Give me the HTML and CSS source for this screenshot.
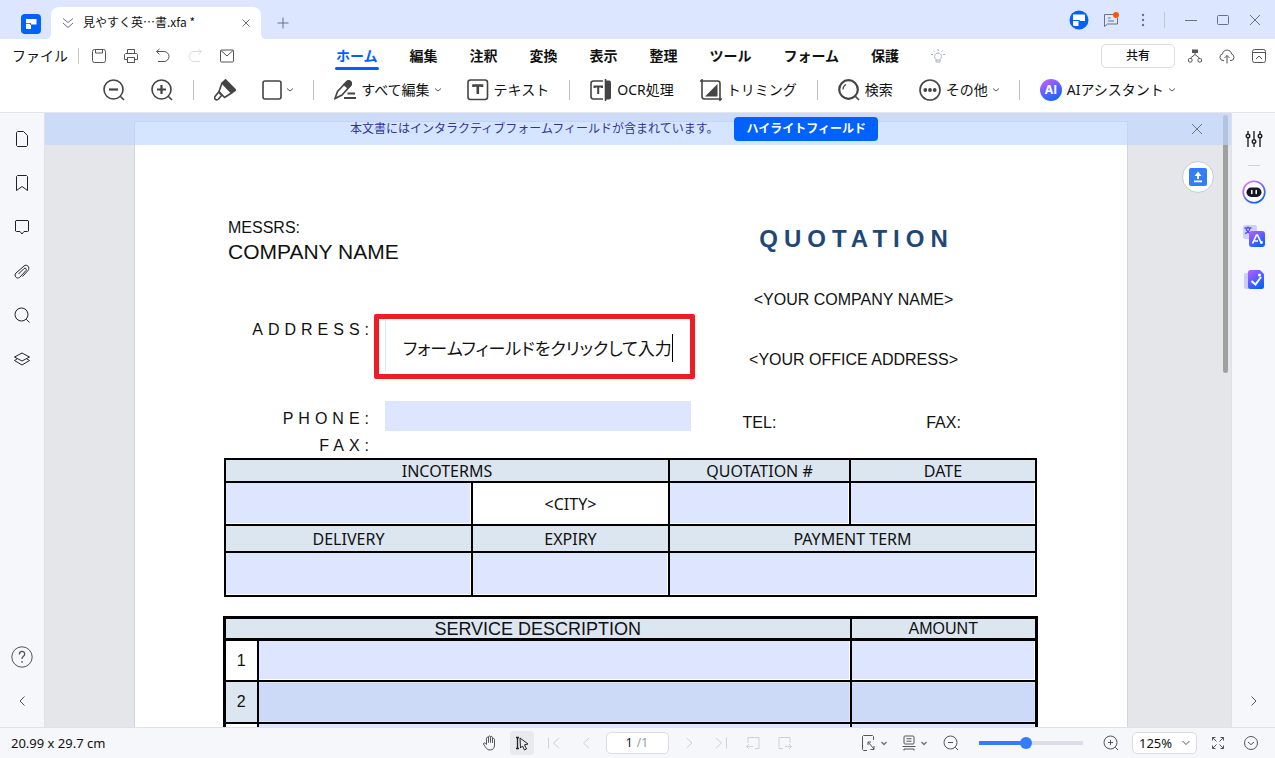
FILE: index.html
```html
<!DOCTYPE html>
<html lang="ja">
<head>
<meta charset="utf-8">
<title>見やすく英…書.xfa *</title>
<link rel="stylesheet" href="styles.css">
</head>
<body>
<header class="titlebar">
  <div class="titlebar-left">
    <svg class="app-logo" width="20" height="20" viewBox="0 0 20 20"><rect width="20" height="20" rx="4" fill="#0061ff"/><path d="M5 5h10.500v5.500H10V15H5z" fill="#fff"/><path d="M5 9.500h5M9.500 9v2" stroke="#0061ff" stroke-width=".8"/></svg>
    <div class="tab">
      <svg class="line-icon soft" width="12" height="12" viewBox="0 0 12 12"><path d="M1 1.500l5 4 5-4M1 6l5 4.500L11 6"/></svg>
      <span class="tab-name">見やすく英…書.xfa *</span>
      <button class="tab-close" aria-label="タブを閉じる"><svg class="line-icon soft" width="8" height="8" viewBox="0 0 8 8"><path d="M.5.5l7 7M7.500.5l-7 7"/></svg></button>
    </div>
    <button class="new-tab" aria-label="新しいタブ"><svg class="line-icon soft" width="12" height="12" viewBox="0 0 12 12"><path d="M6 .5v11M.5 6h11"/></svg></button>
  </div>
  <div class="titlebar-right">
    <button class="win-btn" aria-label="アカウント"><svg width="20" height="20" viewBox="0 0 20 20"><circle cx="10" cy="10" r="9.500" fill="#0061ff"/><path d="M4 4.500h12V11H4zM4 11h6v5H5l-1-1z" fill="#fff"/><path d="M4 10.500h6.500M10 10v6" stroke="#0061ff" stroke-width="1"/></svg></button>
    <button class="win-btn" aria-label="お知らせ"><svg class="line-icon soft" width="18" height="18" viewBox="0 0 18 18"><path d="M12 3.500H2.500v12l3-2.500h10V7M6 7h2.500M6 10h6"/><circle cx="14" cy="4" r="3" fill="#ff5500" stroke="none"/></svg></button>
    <button class="win-btn" aria-label="メニュー"><svg width="4" height="14" viewBox="0 0 4 14" fill="#6b7085"><circle cx="2" cy="2" r="1.200"/><circle cx="2" cy="7" r="1.200"/><circle cx="2" cy="12" r="1.200"/></svg></button>
    <span class="win-sep"></span>
    <button class="win-btn" aria-label="最小化"><svg class="line-icon soft" width="12" height="12" viewBox="0 0 12 12"><path d="M0 6.500h12"/></svg></button>
    <button class="win-btn" aria-label="最大化"><svg class="line-icon soft" width="12" height="12" viewBox="0 0 12 12"><rect x=".5" y="1.500" width="11" height="9" rx="1"/></svg></button>
    <button class="win-btn" aria-label="閉じる"><svg class="line-icon soft" width="12" height="12" viewBox="0 0 12 12"><path d="M1 1l10 10M11 1L1 11"/></svg></button>
  </div>
</header>

<div class="menubar">
  <div class="menu-left">
    <button class="file-btn">ファイル</button>
    <span class="bar-sep"></span>
    <div class="quick">
      <button aria-label="保存"><svg class="line-icon" width="16" height="16" viewBox="0 0 16 16"><rect x="1.500" y="1.500" width="13" height="13" rx="2"/><path d="M4.500 1.500V5h7V1.500"/></svg></button>
      <button aria-label="印刷"><svg class="line-icon" width="16" height="16" viewBox="0 0 16 16"><path d="M4.500 5.500v-4h7v4M4.500 11.500h-3v-5l1-1h11l1 1v5h-3"/><rect x="4.500" y="9.500" width="7" height="5"/></svg></button>
      <button aria-label="元に戻す"><svg class="line-icon" width="16" height="16" viewBox="0 0 16 16"><path d="M4.500 1l-3 2.500 3 3M1.500 3.500H9a5 5 0 0 1 0 10H3"/></svg></button>
      <button aria-label="やり直す" disabled><svg class="line-icon faint" width="16" height="16" viewBox="0 0 16 16"><path d="M11.500 1l3 2.500-3 3M14.500 3.500H7a5 5 0 0 0 0 10h6"/></svg></button>
      <button aria-label="メール"><svg class="line-icon" width="16" height="16" viewBox="0 0 16 16"><rect x="1.500" y="2" width="13" height="12" rx="1"/><path d="M2 2.500L8 8l6-5.500"/></svg></button>
    </div>
  </div>
  <nav class="menu-nav">
    <a href="#" class="active">ホーム</a>
    <a href="#">編集</a>
    <a href="#">注釈</a>
    <a href="#">変換</a>
    <a href="#">表示</a>
    <a href="#">整理</a>
    <a href="#">ツール</a>
    <a href="#">フォーム</a>
    <a href="#">保護</a>
    <button aria-label="ヒント"><svg class="line-icon hint" width="14" height="16" viewBox="0 0 14 16"><path d="M5 11.500C2.500 9.500 3.500 5 7 5s4.500 4.500 2 6.500v2.500H5zM5 12h4M7 1v2M2.500 2.500l1 1.300M11.500 2.500l-1 1.300M0 6.500h2M12 6.500h2"/></svg></button>
  </nav>
  <div class="menu-right">
    <button class="share">共有</button>
    <div class="quick">
      <button aria-label="構成"><svg class="line-icon" width="16" height="16" viewBox="0 0 16 16"><rect x="5.500" y="2" width="5" height="2.500" fill="#555"/><path d="M8 4.500v2L3.500 10M8 6.500l4.500 3.500"/><rect x="1.500" y="10.500" width="3.500" height="3.500" rx="1"/><rect x="11" y="10.500" width="3.500" height="3.500" rx="1"/></svg></button>
      <button aria-label="クラウドへアップロード"><svg class="line-icon" width="16" height="16" viewBox="0 0 16 16"><path d="M5 12.500H4a3.300 3.300 0 0 1-.5-6.500C4 .8 12 .8 12.500 6a3.300 3.300 0 0 1-.5 6.500h-1M8 15.500V7.500M5.500 10L8 7.500l2.500 2.500"/></svg></button>
      <button aria-label="リボンを折りたたむ"><svg class="line-icon" width="16" height="16" viewBox="0 0 16 16"><rect x="1.500" y="1.500" width="13" height="13" rx="2"/><path d="M1.500 4.500h13M5 11l3-3 3 3"/></svg></button>
    </div>
  </div>
</div>

<div class="toolbar">
  <div class="group">
    <button class="tool" aria-label="縮小"><svg class="bold-icon" width="22" height="22" viewBox="0 0 22 22"><circle cx="10.500" cy="10.500" r="9.500"/><path d="M17.500 17.500l3.500 3.500"/><path d="M6 10.500h9" stroke-width="2.200"/></svg></button>
    <button class="tool" aria-label="拡大"><svg class="bold-icon" width="22" height="22" viewBox="0 0 22 22"><circle cx="10.500" cy="10.500" r="9.500"/><path d="M17.500 17.500l3.500 3.500"/><path d="M6 10.500h9M10.500 6v9" stroke-width="2.200"/></svg></button>
  </div>
  <span class="tool-sep"></span>
  <div class="group">
    <button class="tool" aria-label="ハイライト"><svg class="bold-icon" width="22" height="22" viewBox="0 0 22 22"><path d="M8 4L11.500.8 21.500 11l-4 3z" fill="#444" stroke-linejoin="round"/><path d="M8 4L5 12.500l5.500 6 7-4.500M5 12.500L1 17.500c-1.500 2.500 1.500 4.500 3.500 2.500l3-3.500M5 13.500l3.500 3.500" stroke-linejoin="round"/></svg></button>
    <button class="tool" aria-label="図形"><svg class="bold-icon" width="20" height="20" viewBox="0 0 20 20"><rect x="1" y="1" width="18" height="18" rx="2"/></svg><svg class="line-icon chev" width="6" height="4" viewBox="0 0 6 4"><path d="M0 .5l3 2.500 3-2.500"/></svg></button>
  </div>
  <span class="tool-sep"></span>
  <div class="group">
    <button class="tool"><svg class="bold-icon" width="22" height="20" viewBox="0 0 22 20"><path d="M1 18.500l2.500-7L12 2.500c3-3.500 7 0 4.500 3L8 15l-7 3.500z"/><path d="M12 2.500c3-3.500 7 0 4.500 3L14 8l-4-3.500z" fill="#444"/><path d="M13.500 13.500H21M10 18h12" stroke-width="2"/></svg><span>すべて編集</span><svg class="line-icon chev" width="6" height="4" viewBox="0 0 6 4"><path d="M0 .5l3 2.500 3-2.500"/></svg></button>
    <button class="tool"><svg class="bold-icon" width="22" height="22" viewBox="0 0 22 22"><rect x="1" y="1" width="19.500" height="19.500" rx="2.500"/><path d="M6.500 8V6.500h8.500V8M10.800 6.500V15" stroke-width="2.600"/></svg><span>テキスト</span></button>
  </div>
  <span class="tool-sep"></span>
  <div class="group">
    <button class="tool"><svg class="bold-icon" width="22" height="22" viewBox="0 0 22 22"><path d="M13 2H3.500Q1 2 1 4.500v13Q1 20 3.500 20H13" /><path d="M4.500 9V7.500h7.500V9M8.200 7.500V15" stroke-width="2"/><path d="M15.500 0v22" /><path d="M15.500 1.500h3.500q2 0 2 2v15q0 2-2 2h-3.500z" fill="#444" stroke="none"/></svg><span>OCR処理</span></button>
    <button class="tool"><svg class="bold-icon" width="22" height="22" viewBox="0 0 22 22"><path d="M2 0v17.500Q2 20 4.500 20H22M0 2h17.500Q20 2 20 4.500V22"/><path d="M5 17.500L17.500 5v12.500z" fill="#444" stroke="none"/></svg><span>トリミング</span></button>
  </div>
  <span class="tool-sep"></span>
  <div class="group">
    <button class="tool"><svg class="bold-icon" width="22" height="22" viewBox="0 0 22 22"><circle cx="10.500" cy="10.500" r="9.300" stroke-width="2.200"/><path d="M17.500 17.500l3.500 3.500"/><path d="M5 10.500A5.500 5.500 0 0 1 8 5.500" stroke-width="1.200"/></svg><span>検索</span></button>
    <button class="tool"><svg class="bold-icon" width="22" height="22" viewBox="0 0 22 22"><circle cx="11" cy="11" r="10"/><g fill="#444" stroke="none"><circle cx="6.300" cy="11" r="1.900"/><circle cx="11" cy="11" r="1.900"/><circle cx="15.700" cy="11" r="1.900"/></g></svg><span>その他</span><svg class="line-icon chev" width="6" height="4" viewBox="0 0 6 4"><path d="M0 .5l3 2.500 3-2.500"/></svg></button>
  </div>
  <span class="tool-sep"></span>
  <div class="group">
    <button class="tool"><span class="ai-badge">AI</span><span>AIアシスタント</span><svg class="line-icon chev" width="6" height="4" viewBox="0 0 6 4"><path d="M0 .5l3 2.500 3-2.500"/></svg></button>
  </div>
</div>

<div class="workspace">
  <aside class="side side-left">
    <button aria-label="サムネイル"><svg class="line-icon dark" width="16" height="16" viewBox="0 0 16 16"><path d="M3.500.5h6l4 4v10l-1 1h-9l-1-1v-13z"/></svg></button>
    <button aria-label="ブックマーク"><svg class="line-icon dark" width="16" height="18" viewBox="0 0 16 18"><path d="M2.500 16.500v-14l1-1h9l1 1v14L8 12.500z"/></svg></button>
    <button aria-label="コメント"><svg class="line-icon dark" width="16" height="16" viewBox="0 0 16 16"><path d="M2 1.500h12l.5.5v10l-1 .5H10L8 15l-2-2.500H2.500l-1-.5V2z"/></svg></button>
    <button aria-label="添付ファイル"><svg class="line-icon dark" width="16" height="16" viewBox="0 0 16 16"><path d="M8.500 13.500l5.500-6c2.500-3-1-7-4-4.500L2 10c-2.500 2.500.5 6.500 3.500 4.500L12 7.500c1-1.500-.5-3-2-2L4.500 11"/></svg></button>
    <button aria-label="検索"><svg class="line-icon dark" width="16" height="16" viewBox="0 0 16 16"><circle cx="7.500" cy="7.500" r="6.500"/><path d="M12.300 12.300L15.500 15.500"/></svg></button>
    <button aria-label="レイヤー"><svg class="line-icon dark" width="16" height="16" viewBox="0 0 16 16"><path d="M8 2l7.500 4L8 10 .5 6zM3 8L.5 9.500 8 14l7.500-4.500L13 8"/></svg></button>
    <button class="push-end" aria-label="ヘルプ"><svg class="line-icon" width="22" height="22" viewBox="0 0 22 22"><circle cx="11" cy="11" r="10.200"/><path d="M8.300 8.500c0-4 5.400-4 5.400-.5 0 2.500-2.700 2-2.700 5M11 15v1.800" stroke-width="1.300"/></svg></button>
    <button aria-label="サイドバーを閉じる"><svg class="line-icon" width="6" height="10" viewBox="0 0 6 10"><path d="M5.500.5L1 5l4.500 4.500"/></svg></button>
  </aside>

  <main class="viewer">
    <article class="page">
      <section class="doc-head">
        <div class="doc-left">
          <p class="messrs">MESSRS:</p>
          <p class="company">COMPANY NAME</p>
          <div class="row row-address">
            <label class="tracked" for="addr">ADDRESS:</label>
            <div class="callout">
              <div class="callout-inner"><input id="addr" type="text" value="フォームフィールドをクリックして入力"><span class="caret"></span></div>
            </div>
          </div>
          <div class="row row-phone">
            <label class="tracked" for="phone">PHONE:</label>
            <input id="phone" class="phone" type="text">
          </div>
          <p class="tracked fax">FAX:</p>
        </div>
        <div class="doc-right">
          <h1>QUOTATION</h1>
          <p class="your-company">&lt;YOUR COMPANY NAME&gt;</p>
          <p class="your-office">&lt;YOUR OFFICE ADDRESS&gt;</p>
          <div class="contacts"><span>TEL:</span><span>FAX:</span></div>
        </div>
      </section>

      <table class="terms">
        <colgroup><col class="c1"><col class="c2"><col class="c3"><col class="c4"></colgroup>
        <tr class="t-r1"><th colspan="2">INCOTERMS</th><th>QUOTATION #</th><th>DATE</th></tr>
        <tr class="t-r2"><td><input aria-label="INCOTERMS" type="text"></td><td>&lt;CITY&gt;</td><td><input aria-label="QUOTATION #" type="text"></td><td><input aria-label="DATE" type="text"></td></tr>
        <tr class="t-r3"><th>DELIVERY</th><th>EXPIRY</th><th colspan="2">PAYMENT TERM</th></tr>
        <tr class="t-r4"><td><input aria-label="DELIVERY" type="text"></td><td><input aria-label="EXPIRY" type="text"></td><td colspan="2"><input aria-label="PAYMENT TERM" type="text"></td></tr>
      </table>

      <table class="services">
        <colgroup><col class="s1"><col class="s2"><col class="s3"></colgroup>
        <tr class="s-head"><th colspan="2" class="service-title">SERVICE DESCRIPTION</th><th>AMOUNT</th></tr>
        <tr><td>1</td><td><input aria-label="SERVICE 1" type="text"></td><td><input aria-label="AMOUNT 1" type="text"></td></tr>
        <tr class="alt"><td>2</td><td><input aria-label="SERVICE 2" type="text"></td><td><input aria-label="AMOUNT 2" type="text"></td></tr>
        <tr><td></td><td><input aria-label="SERVICE 3" type="text"></td><td><input aria-label="AMOUNT 3" type="text"></td></tr>
      </table>
    </article>

    <span class="scroll-thumb"></span>
    <div class="banner">
      <div class="banner-body">
        <span>本文書にはインタラクティブフォームフィールドが含まれています。</span>
        <button class="highlight">ハイライトフィールド</button>
      </div>
      <button class="banner-close" aria-label="閉じる"><svg class="line-icon soft" width="12" height="12" viewBox="0 0 12 12"><path d="M1 1l10 10M11 1L1 11"/></svg></button>
    </div>
    <button class="float-btn" aria-label="アップロード"><svg width="18" height="18" viewBox="0 0 18 18"><rect width="18" height="18" rx="2" fill="#327dfa"/><path d="M9 3.500L5.500 8H8v3h2V8h2.500zM5 12.500h8v1.800H5z" fill="#fff"/></svg></button>
  </main>

  <aside class="side side-right">
    <button aria-label="プロパティ"><svg class="line-icon dark" width="18" height="18" viewBox="0 0 18 18"><g stroke-width="1.400"><path d="M3 1v3.500M3 8v9M9 1v8.500M9 13v4M15 1v3.500M15 8v9"/><circle cx="3" cy="6" r="1.800"/><circle cx="9" cy="11.500" r="1.800"/><circle cx="15" cy="6" r="1.800"/></g></svg></button>
    <span class="side-sep"></span>
    <button aria-label="AIロボット"><svg width="24" height="24" viewBox="0 0 24 24"><defs><linearGradient id="ring" x1="0" y1="0" x2=".7" y2="1"><stop offset="0" stop-color="#ff74f0"/><stop offset=".5" stop-color="#8367ff"/><stop offset="1" stop-color="#0061ff"/></linearGradient></defs><circle cx="12" cy="12" r="10.800" fill="#fff" stroke="url(#ring)" stroke-width="1.600"/><rect x="4.500" y="7.500" width="15" height="9.500" rx="4.700" fill="#17181f"/><path d="M9.800 10.500v3M14.200 10.500v3" stroke="#fff" stroke-width="1.500" stroke-linecap="round"/></svg></button>
    <button aria-label="翻訳"><svg width="24" height="24" viewBox="0 0 24 24"><defs><linearGradient id="vio" x1="0" y1="0" x2=".6" y2="1"><stop offset="0" stop-color="#bd5cff"/><stop offset="1" stop-color="#0b62ff"/></linearGradient></defs><rect x="1" y="1" width="14" height="14" rx="2" fill="#ccd2fa"/><path d="M2.500 4h7M6 2.500V4M8 4C7.500 7 5 9 3 9.500M4 5c1 2.500 3 4 5 4.500" fill="none" stroke="#4a50e8" stroke-width="1.300"/><rect x="7" y="7" width="16" height="16" rx="3" fill="url(#vio)"/><path d="M10.500 19.500L14.500 11h1l4 8.500M12 17h4" fill="none" stroke="#fff" stroke-width="1.700"/><circle cx="19.500" cy="18.500" r="1.400" fill="#fff"/></svg></button>
    <button aria-label="校正"><svg width="24" height="24" viewBox="0 0 24 24"><path d="M4 5h4v16H4q-2 0-2-2V7q0-2 2-2z" fill="#cdccf9"/><path d="M8.500 2H18l4 4v12.500q0 2.500-2.500 2.500h-11Q6 21 6 18.500v-14Q6 2 8.500 2z" fill="url(#vio)"/><path d="M9.500 13l4 3.500L19 9" fill="none" stroke="#fff" stroke-width="2"/><circle cx="17.500" cy="7" r="1.500" fill="#fff"/></svg></button>
    <button class="push-end" aria-label="サイドバーを開く"><svg class="line-icon" width="6" height="10" viewBox="0 0 6 10"><path d="M.5.5L5 5 .5 9.500"/></svg></button>
  </aside>
</div>

<footer class="status">
  <span class="dims">20.99 x 29.7 cm</span>
  <div class="status-mid">
    <button aria-label="手のひら"><svg class="line-icon" width="16" height="16" viewBox="0 0 16 16"><path d="M4.500 9.500V3.300c0-1.500 2-1.500 2 0V7.500 2c0-1.500 2-1.500 2 0v5.500V2.500c0-1.500 2-1.500 2 0v5.500V4.500c0-1.500 2-1.500 2 0V10c0 3-1.500 5-4.500 5-3 0-4-2-6.500-6 0-1.500 1.500-1.500 2-.5z"/></svg></button>
    <button class="on" aria-label="選択"><svg class="line-icon dark" width="16" height="16" viewBox="0 0 16 16"><path d="M2 2.500h3M3.500 2.500v11M2 13.500h3" stroke-width="1.300"/><path d="M6 3l8 6-3.500.8L12.500 14l-2 1-2-4L6.500 13z"/></svg></button>
    <button aria-label="最初のページ" disabled><svg class="line-icon pale" width="12" height="12" viewBox="0 0 12 12"><path d="M.5.500v11M11 1L5.500 6 11 11"/></svg></button>
    <button aria-label="前のページ" disabled><svg class="line-icon pale" width="12" height="12" viewBox="0 0 12 12"><path d="M9 1L3.500 6 9 11"/></svg></button>
    <div class="page-box"><input aria-label="ページ番号" type="text" value="1"><span>/1</span></div>
    <button aria-label="次のページ" disabled><svg class="line-icon pale" width="12" height="12" viewBox="0 0 12 12"><path d="M3.500 1L9 6l-5.500 5"/></svg></button>
    <button aria-label="最後のページ" disabled><svg class="line-icon pale" width="12" height="12" viewBox="0 0 12 12"><path d="M11.500.5v11M1 1l5.500 5L1 11"/></svg></button>
    <button aria-label="前の表示" disabled><svg class="line-icon pale" width="14" height="14" viewBox="0 0 14 14"><path d="M2 7V1.500h11v11H9M7 10.500H.5M3 8L.5 10.500 3 13"/></svg></button>
    <button aria-label="次の表示" disabled><svg class="line-icon pale" width="14" height="14" viewBox="0 0 14 14"><path d="M12 7V1.500H1v11h4M7 10.500h6.500M11 8l2.500 2.500L11 13"/></svg></button>
  </div>
  <div class="status-right">
    <button class="combo" aria-label="ページに合わせる"><svg class="line-icon" width="14" height="16" viewBox="0 0 14 16"><path d="M11.500 5V1.500l-1-1h-9l-1 1v13l1 1H5M6 7l6 7M6 10V7h3M12 11v3.500H8.500"/></svg><svg class="line-icon soft" width="8" height="5" viewBox="0 0 8 5"><path d="M1.500 1L4 3.500 6.500 1" stroke-width="1.400"/></svg></button>
    <button class="combo" aria-label="ページ表示"><svg class="line-icon" width="14" height="16" viewBox="0 0 14 16"><rect x="2" y="1" width="10" height="8" rx="1"/><path d="M4.500 3.700h5M4.500 6.200h5M.5 11.500h13M2 15.500v-1.500h10v1.500"/></svg><svg class="line-icon soft" width="8" height="5" viewBox="0 0 8 5"><path d="M1.500 1L4 3.500 6.500 1" stroke-width="1.400"/></svg></button>
    <button aria-label="縮小"><svg class="line-icon" width="16" height="16" viewBox="0 0 16 16"><circle cx="7.500" cy="7.500" r="6.500"/><path d="M12.300 12.300l2.700 2.700M5 7.500h5"/></svg></button>
    <input class="zoom-slider" aria-label="ズーム" type="range" min="0" max="100" value="45">
    <button aria-label="拡大"><svg class="line-icon" width="16" height="16" viewBox="0 0 16 16"><circle cx="7.500" cy="7.500" r="6.500"/><path d="M12.300 12.300l2.700 2.700M5 7.500h5M7.500 5v5"/></svg></button>
    <div class="zoom-box"><select aria-label="倍率"><option>125%</option></select><svg class="line-icon" width="8" height="6" viewBox="0 0 8 6"><path d="M.5 1L4 4.500 7.500 1"/></svg></div>
    <button aria-label="全画面"><svg class="line-icon" width="12" height="12" viewBox="0 0 12 12"><path d="M.5 3.500v-3h3M8.500.5h3v3M11.500 8.500v3h-3M3.500 11.500h-3v-3M.5.500L4.500 4.500M11.500.5L7.500 4.500M11.500 11.500L7.500 7.500M.5 11.500L4.500 7.500"/></svg></button>
    <button aria-label="ツールバーを隠す"><svg class="line-icon" width="14" height="14" viewBox="0 0 14 14"><circle cx="7" cy="7" r="6.500"/><path d="M4 6l3 2.700L10 6"/></svg></button>
  </div>
</footer>
</body>
</html>
```
FILE: styles.css
```css
* { box-sizing: border-box; }

body {
  margin: 0;
  height: 100vh;
  display: flex;
  flex-direction: column;
  overflow: hidden;
  background: #fff;
  color: #111;
  font: 14px/20px "Noto Sans", "Noto Sans CJK JP", sans-serif;
}

p, h1 { margin: 0; font-weight: 400; }
svg { display: block; flex: none; }

button {
  display: flex;
  align-items: center;
  justify-content: center;
  padding: 0;
  border: 0;
  background: none;
  color: inherit;
  font: inherit;
  white-space: nowrap;
}

input, select { font: inherit; color: inherit; border: 0; padding: 0; margin: 0; background: none; }

.line-icon { fill: none; stroke: #555; stroke-width: 1; }
.line-icon.soft { stroke: #6b7085; }
.line-icon.faint { stroke: #dcdcdc; }
.line-icon.pale { stroke: #cfd1d8; }
.line-icon.dark { stroke: #222; }
.line-icon.hint { stroke: #a9adc0; }
.bold-icon { fill: none; stroke: #444; stroke-width: 1.6; }

/* Title bar */
.titlebar {
  flex: none;
  height: 39px;
  display: flex;
  justify-content: space-between;
  background: #dce6ff;
}
.titlebar-left { display: flex; padding-left: 21px; }
.app-logo { margin-top: 14px; }
.tab {
  position: relative;
  width: 210px;
  margin: 7px 0 0 10px;
  padding: 0 11px;
  display: flex;
  align-items: center;
  gap: 9px;
  background: #fff;
  border-radius: 8px 8px 0 0;
}
.tab::before, .tab::after {
  content: "";
  position: absolute;
  bottom: 0;
  width: 5px;
  height: 5px;
}
.tab::before { left: -5px; background: radial-gradient(circle at 0 0, #dce6ff 5px, #fff 5px); }
.tab::after { right: -5px; background: radial-gradient(circle at 100% 0, #dce6ff 5px, #fff 5px); }
.tab-name {
  flex: 1;
  padding-bottom: 3px;
  font-family: "Noto Sans CJK JP", sans-serif;
  font-size: 12px;
  white-space: nowrap;
}
.tab-close { width: 8px; height: 20px; }
.new-tab { width: 44px; padding-top: 6px; }
.titlebar-right { display: flex; align-items: center; padding-right: 4px; }
.win-btn { width: 32px; height: 40px; }
.win-sep { width: 1px; height: 16px; margin: 0 10px 0 5px; background: #c2c7d3; }

/* Menu bar */
.menubar {
  flex: none;
  height: 34px;
  display: grid;
  grid-template-columns: 1fr auto 1fr;
  align-items: center;
  padding-left: 6px;
}
.menu-left, .menu-right { display: flex; align-items: center; }
.menu-right { justify-content: flex-end; gap: 4px; }
.file-btn { padding-left: 6px; }
.bar-sep { width: 1px; height: 16px; margin: 0 4px 0 10px; background: #ccc; }
.quick { display: flex; }
.quick button { width: 32px; height: 32px; }
.menu-nav { display: flex; align-items: center; gap: 32px; }
.menu-nav a {
  position: relative;
  color: #111;
  font-weight: 700;
  text-decoration: none;
  white-space: nowrap;
}
.menu-nav .active { color: #0061ff; }
.menu-nav .active::after {
  content: "";
  position: absolute;
  inset: auto -1px -4px;
  height: 3px;
  border-radius: 2px;
  background: #0061ff;
}
.share {
  width: 74px;
  height: 24px;
  border: 1px solid #dcdee0;
  border-radius: 5px;
  font-size: 12px;
  font-weight: 500;
}

/* Toolbar */
.toolbar {
  flex: none;
  height: 40px;
  display: flex;
  align-items: flex-start;
  justify-content: center;
  gap: 20px;
  padding: 6px 0 0 3px;
  border-bottom: 1px solid #e3e5e8;
}
.group { display: flex; gap: 26px; }
.tool { height: 22px; gap: 5px; }
.tool-sep { width: 1px; height: 20px; margin-top: 1px; background: #c0c3cc; }
.ai-badge {
  width: 22px;
  border-radius: 50%;
  background: linear-gradient(150deg, #c65cff 10%, #5a62ff 50%, #0068ff);
  color: #fff;
  font: 700 12px/22px Inter, sans-serif;
  text-align: center;
}

/* Workspace */
.workspace { flex: 1; min-height: 0; display: flex; }
.side {
  flex: none;
  width: 45px;
  display: flex;
  flex-direction: column;
  padding: 4px 0;
  background: #f5f7fb;
}
.side-left { border-right: 1px solid #e0e1e6; }
.side-right { width: 44px; border-left: 1px solid #e0e1e6; }
.side button { height: 44px; }
.side-sep { width: 12px; height: 1px; margin: 4px auto; background: #d0d2d8; }
.side .push-end { margin-top: auto; }
.viewer {
  flex: 1;
  min-width: 0;
  position: relative;
  overflow: hidden;
  padding: 8px 14px 0 0;
  background: #e5e6ea;
}
.page {
  width: 994px;
  min-height: 1404px;
  margin: 0 auto;
  padding: 94px 89px 0;
  border: 1px solid #ced4e0;
  background: #fff;
  font: 16px/20px "Liberation Sans", Arial, sans-serif;
}

.scroll-thumb {
  position: absolute;
  top: 2px;
  right: 3px;
  width: 5px;
  height: 258px;
  border-radius: 3px;
  background: #a0a0a0;
}
.banner {
  position: absolute;
  inset: 0 0 auto;
  height: 32px;
  display: flex;
  align-items: center;
  padding-right: 20px;
  background: rgba(190, 213, 255, .65);
  color: #2f3596;
  font-size: 12px;
}
.banner-body { flex: 1; display: flex; align-items: center; justify-content: center; gap: 16px; }
.highlight {
  height: 24px;
  padding: 0 12px;
  border-radius: 4px;
  background: #0061ff;
  color: #fff;
  font-weight: 700;
}
.banner-close { width: 28px; height: 28px; }
.float-btn {
  position: absolute;
  top: 48px;
  right: 17px;
  width: 32px;
  height: 32px;
  border: 1px solid #c5c9dc;
  border-radius: 50%;
  background: #fff;
}

/* Quotation form */
.doc-head { display: grid; grid-template-columns: 445px 1fr; padding-bottom: 3px; }
.messrs { padding-left: 4px; line-height: 24px; }
.company { padding-left: 4px; font-size: 21px; line-height: 24px; }
.row { display: flex; align-items: flex-start; }
.tracked { flex: none; width: 150px; text-align: right; letter-spacing: 5px; }
.row-address { margin: 50px 0 22px; }
.row-address .tracked { line-height: 32px; }
.callout {
  flex: none;
  width: 321px;
  height: 65px;
  padding: 0 6px;
  border: 5px solid #ee1c25;
  border-radius: 2px;
}
.callout-inner {
  height: 52px;
  display: flex;
  align-items: center;
  padding: 6px 0 0 17px;
  border-left: 1px solid #dee5ff;
}
.callout input {
  height: 28px;
  font: 17px/28px "Noto Sans CJK JP", sans-serif;
  font-feature-settings: "palt";
  field-sizing: content;
}
.caret { width: 1px; height: 28px; background: #000; }
.row-phone .tracked { line-height: 36px; }
.phone { flex: none; width: 306px; height: 30px; margin-left: 11px; background: #dee5ff; }
.fax { line-height: 18px; }
.doc-right { text-align: center; padding-top: 9px; }
.doc-right h1 {
  padding-left: 6px;
  color: #1f4879;
  font-size: 24px;
  line-height: 28px;
  font-weight: 700;
  letter-spacing: 6px;
}
.your-company { margin-top: 37px; }
.your-office { margin-top: 40px; }
.contacts { display: grid; grid-template-columns: 181px 187px; margin-top: 43px; }

table { border-collapse: collapse; table-layout: fixed; }
th, td { padding: 0; border: 2px solid #000; text-align: center; font-weight: 400; }
th { background: #dce6f0; }
td input { display: block; width: 100%; background: #dee5ff; }
.terms { width: 813px; font: 16px/20px "Noto Sans", sans-serif; }
.c1 { width: 247px; }
.c2 { width: 197px; }
.c3 { width: 181px; }
.c4 { width: 186px; }
.t-r1 { height: 23px; }
.t-r2 { height: 43px; }
.t-r3 { height: 27px; }
.t-r4 { height: 44px; }
.terms td:has(input) { padding: 0 1px 1px 0; }
.t-r2 input { height: 40px; }
.t-r4 input { height: 41px; }

.services {
  width: 814px;
  margin: 19px 0 0 -1px;
  border: 3px solid #000;
}
.services tr { height: 41px; }
.services .s-head { height: 22px; }
.services .s-head th { border-top-width: 3px; border-bottom-width: 3px; line-height: 18px; }
.services .service-title { font-size: 18px; }
.s1 { width: 33px; }
.s2 { width: 593px; }
.s3 { width: 186px; }
.services td:has(input) { padding: 0 1px 1px 0; }
.services input { height: 38px; }
.services .alt { height: 42px; }
.alt td { background: #dce6f0; }
.alt input { background: #ccdaf7; }

/* Status bar */
.status {
  flex: none;
  height: 31px;
  display: grid;
  grid-template-columns: 1fr auto 1fr;
  align-items: center;
  padding: 0 12px 0 11px;
  border-top: 1px solid #e0e1e6;
  background: #f5f7fb;
  font-size: 12px;
}
.dims { font-size: 13px; }
.status-mid, .status-right { display: flex; align-items: center; gap: 8px; }
.status-right { justify-content: flex-end; gap: 9px; }
.status button { width: 24px; height: 24px; border-radius: 4px; }
.status .on { background: #e8eaef; }
.page-box, .zoom-box {
  height: 22px;
  display: flex;
  align-items: center;
  border: 1px solid #dcdde2;
  border-radius: 5px;
  background: #fff;
}
.page-box { width: 63px; justify-content: center; gap: 3px; color: #999; }
.page-box input { width: 8px; color: #111; }
.status .combo { width: 31px; gap: 4px; }
.zoom-box { width: 65px; padding: 0 6px; font-size: 13px; }
.zoom-box select { flex: 1; min-width: 0; appearance: none; }
.zoom-slider {
  appearance: none;
  width: 104px;
  height: 12px;
  margin: 0 7px;
}
.zoom-slider::-webkit-slider-runnable-track {
  height: 4px;
  background: linear-gradient(90deg, #327dff 45%, #dcdde8 45%);
}
.zoom-slider::-webkit-slider-thumb {
  appearance: none;
  width: 12px;
  height: 12px;
  margin-top: -4px;
  border-radius: 50%;
  background: #327dff;
}
```
